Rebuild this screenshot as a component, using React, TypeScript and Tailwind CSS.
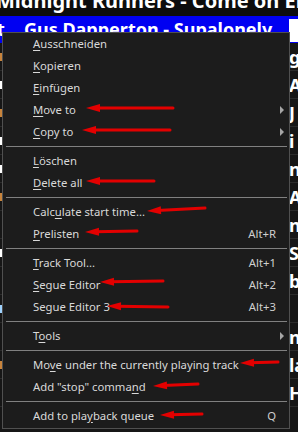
import React from "react";

type Entry =
  | { kind: "item"; label: string; shortcut?: string; submenu?: boolean }
  | { kind: "sep" };

const menu: Entry[] = [
  { kind: "item", label: "&Ausschneiden" },
  { kind: "item", label: "&Kopieren" },
  { kind: "item", label: "&Einfügen" },
  { kind: "item", label: "&Move to", submenu: true },
  { kind: "item", label: "&Copy to", submenu: true },
  { kind: "sep" },
  { kind: "item", label: "&Löschen" },
  { kind: "item", label: "&Delete all" },
  { kind: "sep" },
  { kind: "item", label: "Calc&ulate start time..." },
  { kind: "item", label: "&Prelisten", shortcut: "Alt+R" },
  { kind: "sep" },
  { kind: "item", label: "&Track Tool...", shortcut: "Alt+1" },
  { kind: "item", label: "&Segue Editor", shortcut: "Alt+2" },
  { kind: "item", label: "Segue Editor 3", shortcut: "Alt+3" },
  { kind: "sep" },
  { kind: "item", label: "T&ools", submenu: true },
  { kind: "sep" },
  { kind: "item", label: "Mo&ve under the currently playing track" },
  { kind: "item", label: 'Add "stop" comma&nd' },
  { kind: "sep" },
  { kind: "item", label: "Add to pla&yback queue", shortcut: "Q" },
];

// rows of the playlist behind the menu: colour bit on the left edge, fragment on the right
const rows = [
  { left: "bg-[#c8843c]", right: "g" },
  { left: "bg-white", right: "A" },
  { left: "bg-[#c8843c]", right: "J" },
  { left: "bg-white", right: "i" },
  { left: "bg-white", right: "n" },
  { left: "bg-[#c8843c]", right: "A" },
  { left: "", right: "no" },
  { left: "bg-white", right: "St" },
  { left: "", right: "b" },
  { left: "bg-[#9fd3ff]", right: "" },
  { left: "", right: "ni" },
  { left: "bg-[#c8843c]", right: "la" },
  { left: "", right: "H" },
];

// annotation arrows: tip x/y, tail x/y
const arrows = [
  [86, 108, 173, 108],
  [82, 130, 170, 130],
  [86, 181, 154, 181],
  [147, 211, 205, 208],
  [85, 232, 137, 231],
  [100, 282, 163, 281],
  [107, 306, 168, 307],
  [240, 363, 278, 362],
  [153, 386, 198, 384],
  [160, 415, 202, 414],
];

function Label({ text }: { text: string }) {
  const i = text.indexOf("&");
  if (i < 0) return <span>{text}</span>;
  return (
    <span>
      {text.slice(0, i)}
      <u className="underline-offset-2">{text[i + 1]}</u>
      {text.slice(i + 2)}
    </span>
  );
}

function MenuItem({ entry }: { entry: Extract<Entry, { kind: "item" }> }) {
  return (
    <div className="flex h-[22px] items-center pl-[30px] text-[11.3px] text-[#d9d9d9]">
      <Label text={entry.label} />
      <span className="flex-1" />
      {entry.shortcut && <span className="text-[#cfcfcf]">{entry.shortcut}</span>}
      <span className="flex w-[13px] pl-[4px]">
        {entry.submenu && (
          <svg width="4" height="8" viewBox="0 0 4 8">
            <path d="M0 0 L4 4 L0 8 Z" fill="#a6a6a6" />
          </svg>
        )}
      </span>
    </div>
  );
}

export default function App() {
  return (
    <div
      className="relative h-[432px] w-[298px] overflow-hidden bg-[#161616]"
      style={{ fontFamily: '"Noto Sans", "Liberation Sans", sans-serif' }}
    >
      <div className="h-[16px] overflow-hidden bg-[#0d0d0d]">
        <div className="-ml-[4px] mt-[-11px] whitespace-nowrap text-[20px] font-bold leading-[24px] text-white">
          Midnight Runners - Come on Eileen
        </div>
      </div>

      <div className="flex h-[27px] bg-[#0000f2]">
        <div className="flex-1 overflow-hidden whitespace-nowrap text-[18px] font-bold leading-[27px] text-white">
          <span className="-ml-[3px]">t,</span>
          <span className="ml-[14px]">Gus Dapperton - Supalonely</span>
        </div>
        <div className="mt-[3px] h-[23px] w-[9px] bg-white" />
      </div>

      <div className="flex flex-col">
        {rows.map((r, i) => (
          <div key={i} className="flex h-[28px] border-b border-[#2b2b2b]">
            <div className="flex w-[2px] items-center">
              <div className={`h-[8px] w-[2px] ${r.left}`} />
            </div>
            <div className="flex-1" />
            <div className="w-[9px] overflow-hidden whitespace-nowrap text-[18px] font-bold leading-[28px] text-white">
              {r.right}
            </div>
          </div>
        ))}
      </div>

      <div className="absolute left-[2px] top-[32px] w-[288px] border border-[#505050] bg-[#1c1c1c] pb-[1px]">
        {menu.map((e, i) =>
          e.kind === "sep" ? (
            <div key={i} className="flex h-[7px] items-center pl-[3px] pr-[2px]">
              <div className="h-px flex-1 bg-[#808080]" />
            </div>
          ) : (
            <MenuItem key={i} entry={e} />
          )
        )}
      </div>

      <svg className="pointer-events-none absolute left-0 top-0" width="298" height="432">
        {arrows.map(([x1, y1, x2, y2], i) => {
          const a = Math.atan2(y2 - y1, x2 - x1);
          const c = Math.cos(a);
          const s = Math.sin(a);
          const bx = x1 + 14 * c;
          const by = y1 + 14 * s;
          return (
            <g key={i}>
              <line x1={x1 + 10 * c} y1={y1 + 10 * s} x2={x2} y2={y2} stroke="#e30000" strokeWidth="3" strokeLinecap="round" />
              <polygon
                points={`${x1},${y1} ${bx - 4 * s},${by + 4 * c} ${bx + 4 * s},${by - 4 * c}`}
                fill="#e30000"
              />
            </g>
          );
        })}
      </svg>
    </div>
  );
}
